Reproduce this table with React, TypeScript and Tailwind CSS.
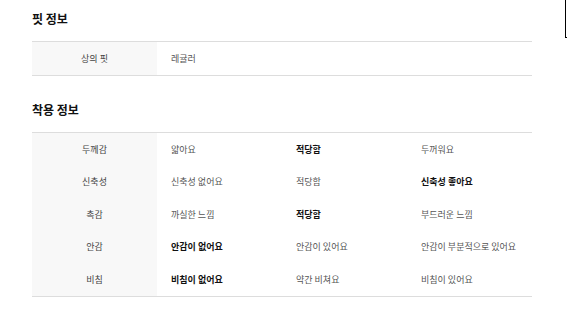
const fontStack = { fontFamily: '"Noto Sans CJK KR", "Noto Sans", sans-serif' };

type Cell = { text: string; bold?: boolean };

const wearRows: { label: string; cells: Cell[] }[] = [
  { label: "두께감", cells: [{ text: "얇아요" }, { text: "적당함", bold: true }, { text: "두꺼워요" }] },
  { label: "신축성", cells: [{ text: "신축성 없어요" }, { text: "적당함" }, { text: "신축성 좋아요", bold: true }] },
  { label: "촉감", cells: [{ text: "까실한 느낌" }, { text: "적당함", bold: true }, { text: "부드러운 느낌" }] },
  { label: "안감", cells: [{ text: "안감이 없어요", bold: true }, { text: "안감이 있어요" }, { text: "안감이 부분적으로 있어요" }] },
  { label: "비침", cells: [{ text: "비침이 없어요", bold: true }, { text: "약간 비쳐요" }, { text: "비침이 있어요" }] },
];

function SectionTitle({ children }: { children: React.ReactNode }) {
  return <h2 className="text-[12px] leading-[14px] font-bold text-[#111]">{children}</h2>;
}

function Label({ children }: { children: React.ReactNode }) {
  return (
    <div className="w-[125px] bg-[#f8f8f8] flex items-center justify-center text-[#444]">
      {children}
    </div>
  );
}

export default function App() {
  return (
    <div className="relative w-[567px] h-[316px] bg-white overflow-hidden" style={fontStack}>
      <div className="absolute left-[565px] top-[-1px] w-[10px] h-[39px] border-l border-b border-black" />
      <div className="pl-[32px] pt-[12px] w-[532px]">
        <SectionTitle>핏 정보</SectionTitle>
        <div className="mt-[15px] border-t border-b border-[#dddddd] text-[9px]">
          <div className="flex h-[33px]">
            <Label>상의 핏</Label>
            <div className="flex items-center pl-[14px] text-[#555]">레귤러</div>
          </div>
        </div>

        <div className="mt-[27px]">
          <SectionTitle>착용 정보</SectionTitle>
        </div>
        <div className="mt-[15px] border-t border-b border-[#dddddd] text-[9px]">
          {wearRows.map((row) => (
            <div key={row.label} className="flex h-[32.6px]">
              <Label>{row.label}</Label>
              {row.cells.map((c, i) => (
                <div
                  key={i}
                  className={
                    "w-[125px] flex items-center pl-[14px] " +
                    (c.bold ? "font-bold text-[#111]" : "text-[#555]")
                  }
                >
                  {c.text}
                </div>
              ))}
            </div>
          ))}
        </div>
      </div>
    </div>
  );
}
